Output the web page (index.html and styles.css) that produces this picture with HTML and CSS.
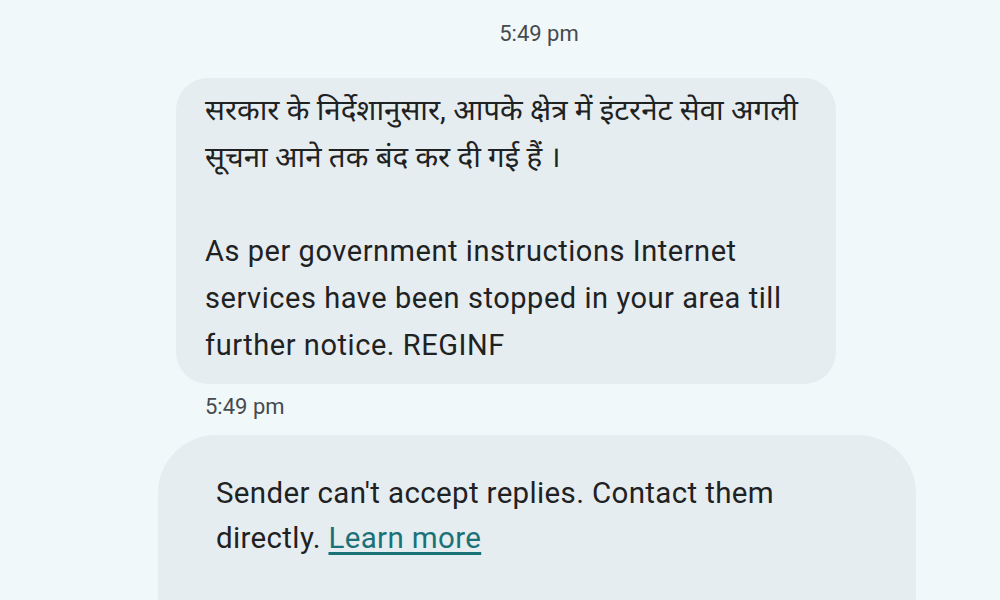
FILE: index.html
```html
<!DOCTYPE html>
<html lang="hi">
<head>
<meta charset="utf-8">
<title>Messages</title>
<link rel="stylesheet" href="styles.css">
</head>
<body>
<main class="thread">
  <div class="stamp stamp-center">5:49 pm</div>

  <div class="msg">
    <div class="bubble">
      <p class="hi">सरकार के निर्देशानुसार, आपके क्षेत्र में इंटरनेट सेवा अगली सूचना आने तक बंद कर दी गई हैं ।</p>
      <p class="en">As per government instructions Internet services have been stopped in your area till further notice. REGINF</p>
    </div>
    <div class="stamp stamp-left">5:49 pm</div>
  </div>

  <div class="notice">
    <p>Sender can't accept replies. Contact them directly. <a href="#" class="link">Learn more</a></p>
  </div>
</main>
</body>
</html>
```

FILE: styles.css
```css
html, body {
  margin: 0;
  padding: 0;
  background: #f1f8fa;
  height: 100%;
  overflow: hidden;
}

body {
  font-family: Roboto, "Noto Sans", "Noto Sans Devanagari", sans-serif;
  color: #1f2223;
}

.thread {
  width: 1000px;
  display: flex;
  flex-direction: column;
}

.stamp {
  font-size: 22px;
  color: #464b4e;
  line-height: 26px;
}

.stamp-center {
  align-self: center;
  margin: 21px 0 0 78px;
}

.msg {
  margin: 31px 0 0 176px;
  display: flex;
  flex-direction: column;
}

.bubble {
  width: 660px;
  box-sizing: border-box;
  background: #e6edf0;
  border-radius: 32px;
  padding: 9px 20px 15px 29px;
  line-height: 47px;
}

.bubble p {
  margin: 0;
}

.bubble .hi {
  font-size: 29.5px;
}

.bubble .en {
  margin-top: 47px;
  font-size: 29px;
  letter-spacing: 0.55px;
}

.stamp-left {
  margin: 10px 0 0 29px;
}

.notice {
  margin: 15px 0 0 158px;
  width: 758px;
  height: 165px;
  box-sizing: border-box;
  background: #e6edf0;
  border-radius: 58px 58px 0 0;
  padding: 36px 110px 0 58px;
  font-size: 29.5px;
  letter-spacing: 0.35px;
  line-height: 45px;
}

.notice p {
  margin: 0;
}

.link {
  color: #1b7178;
  text-decoration: underline;
  text-decoration-thickness: 3px;
  text-underline-offset: 4px;
}
```
